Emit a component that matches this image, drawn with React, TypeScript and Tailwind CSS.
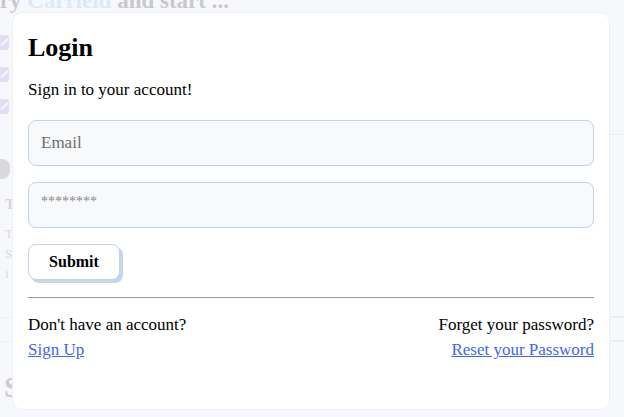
import React from "react";

const serif = { fontFamily: '"Liberation Serif", "Times New Roman", serif' };

function Check() {
  return (
    <div className="w-[9px] h-[15px] rounded-r-[3px] bg-[#e4ddf3] flex items-center justify-center overflow-hidden">
      <svg width="9" height="9" viewBox="0 0 9 9">
        <path d="M1 7 L8 1" stroke="#ffffff" strokeWidth="1.5" fill="none" />
      </svg>
    </div>
  );
}

export default function App() {
  return (
    <div
      className="relative w-[624px] h-[417px] overflow-hidden bg-[#f7f8fb]"
      style={serif}
    >
      {/* faded background page */}
      <div className="flex flex-col text-[#c9c9cd]">
        <div className="h-[12px] overflow-visible">
          <div className="-mt-[13px] ml-[-14px] text-[23px] font-bold leading-[28px] whitespace-nowrap">
            Try <span className="text-[#dbeaf6]">Carrieid</span> and start ...
          </div>
        </div>
        <div className="flex flex-col gap-[17px] mt-[23px]">
          <Check />
          <Check />
          <Check />
        </div>
        <div className="mt-[45px] ml-[-6px] w-[16px] h-[20px] rounded-full bg-[#d9d9dd]" />
        <div className="mt-[15px] flex flex-col text-[13px] leading-[20px] text-[#d8d8db] pl-[5px]">
          <span className="font-bold text-[15px]">T</span>
          <span className="mt-[10px]">T</span>
          <span>S</span>
          <span>i</span>
        </div>
        <div className="mt-[33px] border-t border-[#eceef3]" />
        <div className="mt-[23px] border-t border-[#eceef3]" />
        <div className="mt-[27px] ml-[4px] text-[30px] font-bold leading-[36px] text-[#cdcdd1]">
          S
        </div>
      </div>
      <div className="absolute right-0 top-[134px] w-[14px] border-t border-[#eceef3]" />
      <div className="absolute right-0 top-[316px] w-[14px] border-t border-[#eceef3]" />
      <div className="absolute right-0 top-[340px] w-[14px] border-t border-[#eceef3]" />

      {/* modal */}
      <div className="absolute left-[12px] top-[12px] w-[598px] h-[398px] rounded-[10px] bg-white border border-[#eef0f5] px-[15px] pt-[19px] flex flex-col text-black">
        <h1 className="text-[26px] leading-[32px] font-bold">Login</h1>
        <p className="mt-[14px] text-[17px] leading-[24px]">Sign in to your account!</p>
        <div className="mt-[18px] flex flex-col gap-[16px]">
          <input
            type="email"
            placeholder="Email"
            className="h-[46px] w-full rounded-[8px] border border-[#c3d3e6] bg-[#f7f9fb] px-[12px] text-[17px] placeholder:text-[#6e6e6e] outline-none"
            style={serif}
          />
          <input
            type="password"
            placeholder="********"
            className="h-[46px] w-full rounded-[8px] border border-[#c3d3e6] bg-[#f7f9fb] px-[12px] pb-[6px] text-[14px] placeholder:text-[#8a8a8a] outline-none"
            style={serif}
          />
        </div>
        <div className="mt-[16px]">
          <button
            className="w-[92px] h-[36px] rounded-[8px] border border-[#c3d3e6] bg-white text-[16px] font-bold shadow-[3px_3px_0_#c5d5ea]"
            style={serif}
          >
            Submit
          </button>
        </div>
        <div className="mt-[17px] border-t border-[#9a9a9a]" />
        <div className="mt-[14px] flex justify-between text-[17px] leading-[25px]">
          <div className="flex flex-col items-start">
            <span>Don't have an account?</span>
            <a href="#" className="text-[#3e66f0] underline">
              Sign Up
            </a>
          </div>
          <div className="flex flex-col items-end">
            <span>Forget your password?</span>
            <a href="#" className="text-[#3e66f0] underline">
              Reset your Password
            </a>
          </div>
        </div>
      </div>
    </div>
  );
}
